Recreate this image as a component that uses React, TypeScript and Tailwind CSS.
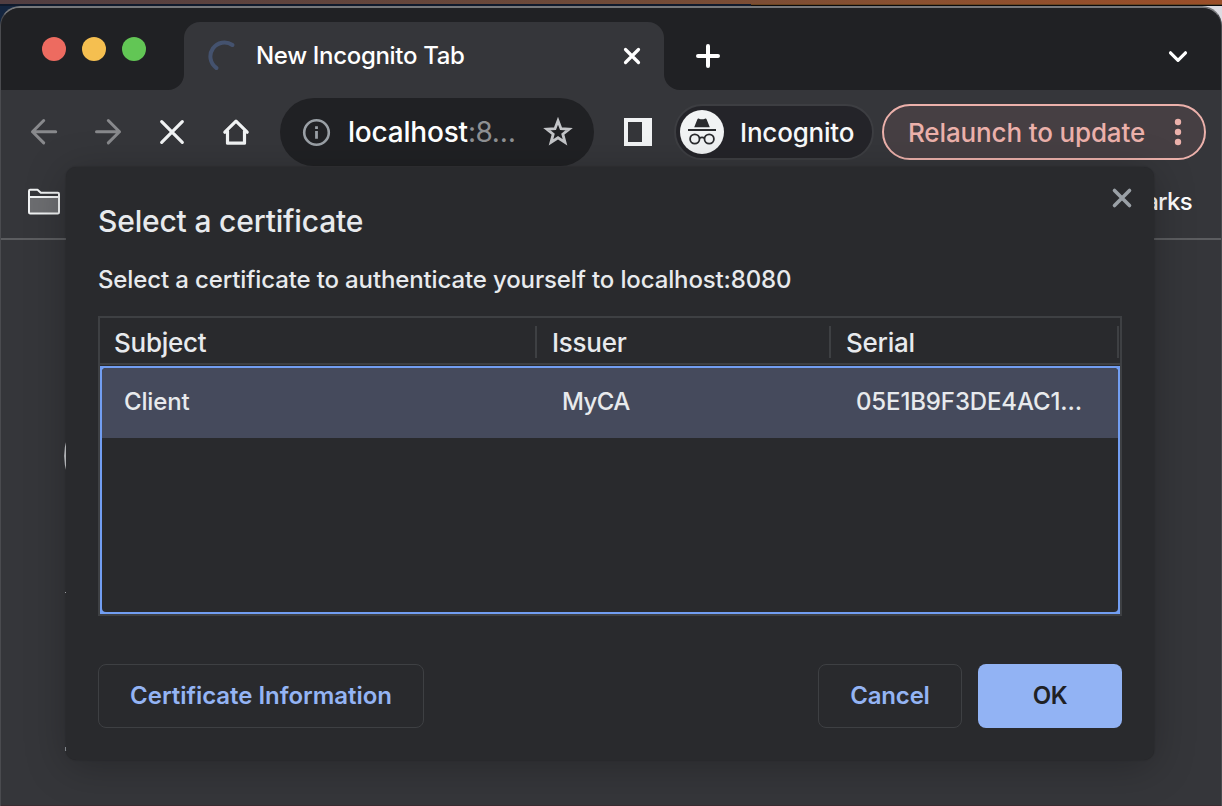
import React from "react";

const line = {
  fill: "none",
  stroke: "currentColor",
  strokeLinecap: "round" as const,
  strokeLinejoin: "round" as const,
};

function TabFoot({ flip = false }: { flip?: boolean }) {
  return (
    <svg className="block h-4 w-4 self-end" viewBox="0 0 16 16" fill="#35363a">
      <path d={flip ? "M0 0A16 16 0 0 0 16 16H0Z" : "M16 0A16 16 0 0 1 0 16H16Z"} />
    </svg>
  );
}

function TabStrip() {
  return (
    <div className="flex h-[82px] shrink-0 bg-[#202124]">
      <div className="flex w-[167px] shrink-0 items-start gap-4 pt-[29px] pl-[41px]">
        <span className="h-6 w-6 shrink-0 rounded-full bg-[#ed6b60]" />
        <span className="h-6 w-6 shrink-0 rounded-full bg-[#f5bf50]" />
        <span className="h-6 w-6 shrink-0 rounded-full bg-[#62c655]" />
      </div>
      <TabFoot />
      <div className="mt-[14px] flex w-[480px] shrink-0 items-center rounded-t-[16px] bg-[#35363a] pr-4 pl-[23px] text-white">
        <svg className="h-8 w-8 text-[#44526e]" viewBox="0 0 32 32" {...line} strokeWidth="4">
          <path d="M25.4 5A14 14 0 1 0 9.4 28" />
        </svg>
        <span className="ml-[17px] flex-1 text-2xl font-medium tracking-[-0.32px]">New Incognito Tab</span>
        <svg className="h-8 w-8" viewBox="0 0 32 32" {...line} strokeWidth="3.2">
          <path d="M9.5 9.5L22.5 22.5M22.5 9.5L9.5 22.5" />
        </svg>
      </div>
      <TabFoot flip />
      <div className="mt-[14px] flex flex-1 items-center justify-between pr-[27px] pl-3 text-white">
        <svg className="h-8 w-8" viewBox="0 0 32 32" {...line} strokeWidth="4">
          <path d="M16 6V26M6 16H26" />
        </svg>
        <svg className="h-8 w-8" viewBox="0 0 32 32" {...line} strokeWidth="3.2">
          <path d="M8.5 12.8L16 20.3L23.5 12.8" />
        </svg>
      </div>
    </div>
  );
}

function NavIcons() {
  return (
    <div className="flex shrink-0 items-center gap-8 text-[#f1f3f4]">
      <svg className="h-8 w-8 text-[#88898c]" viewBox="0 0 32 32" {...line} strokeWidth="3">
        <path d="M27.7 15.7H4.5M15.7 4.5L4.5 15.7L15.7 26.9" />
      </svg>
      <svg className="h-8 w-8 text-[#88898c]" viewBox="0 0 32 32" {...line} strokeWidth="3">
        <path d="M4.5 15.7H27.5M16.3 4.5L27.5 15.7L16.3 26.9" />
      </svg>
      <svg className="h-8 w-8" viewBox="0 0 32 32" {...line} strokeWidth="3.2">
        <path d="M5.7 5.7L26.3 26.3M26.3 5.7L5.7 26.3" />
      </svg>
      <svg className="h-8 w-8" viewBox="0 0 32 32" {...line} strokeWidth="3.2">
        <path d="M4.8 16.2L16 5.2L27.2 16.2M7.5 15V27.2H24.5V15" />
      </svg>
    </div>
  );
}

function Omnibox() {
  return (
    <div className="ml-7 flex h-[68px] w-[314px] shrink-0 items-center rounded-full bg-[#202124] pr-5 pl-[22px]">
      <svg className="h-[29px] w-[29px]" viewBox="0 0 29 29" fill="none">
        <circle cx="14.5" cy="14.5" r="12.3" stroke="#9aa0a6" strokeWidth="2.6" />
        <path d="M13.1 8.2H15.9V11H13.1ZM13.1 12.9H15.9V20.8H13.1Z" fill="#9aa0a6" />
      </svg>
      <span className="ml-[17px] flex-1 text-[28px] font-medium tracking-[-0.2px] whitespace-nowrap text-white">
        localhost<span className="font-normal tracking-[-0.5px] text-[#8e9093]">:8…</span>
      </span>
      <svg className="h-8 w-8" viewBox="0 0 32 32" fill="none">
        <path
          d="M16 4.8L19 12.7L27.1 13.1L20.8 18.2L23 26.4L16 21.8L9 26.4L11.2 18.2L4.9 13.1L13 12.7Z"
          stroke="#c3c5c8"
          strokeWidth="2.8"
        />
      </svg>
    </div>
  );
}

function IncognitoIcon() {
  return (
    <svg className="h-11 w-11 shrink-0" viewBox="0 0 44 44" fill="none">
      <circle cx="22" cy="22" r="22" fill="#f1f3f4" />
      <path
        d="M14.2 17.2L17.3 9.5C17.6 8.7 18.4 8.4 19.1 8.7C21 9.4 23 9.4 24.9 8.7C25.6 8.4 26.4 8.7 26.7 9.5L29.8 17.2Z"
        fill="#2a2b2e"
      />
      <path d="M8 20H36" stroke="#2a2b2e" strokeWidth="1.8" />
      <circle cx="14.8" cy="29" r="4.7" stroke="#2a2b2e" strokeWidth="1.8" />
      <circle cx="29.2" cy="29" r="4.7" stroke="#2a2b2e" strokeWidth="1.8" />
      <path d="M19.4 28.3C21 27.2 23 27.2 24.6 28.3" stroke="#2a2b2e" strokeWidth="1.8" />
    </svg>
  );
}

function Toolbar() {
  return (
    <div className="flex h-[84px] shrink-0 items-center pl-[27px]">
      <NavIcons />
      <Omnibox />
      <svg className="ml-[30px] h-7 w-7 shrink-0" viewBox="0 0 28 28" fill="#f1f3f4" fillRule="evenodd">
        <path d="M0 0H28V28H0ZM4 4V24H18V4Z" />
      </svg>
      <div className="ml-[22px] flex h-14 w-[200px] shrink-0 items-center rounded-full border-2 border-[#3d3e42] bg-[#242429] pl-1 text-[26px] text-[#f8f9fa]">
        <IncognitoIcon />
        <span className="ml-4 font-medium tracking-[-0.2px] whitespace-nowrap">Incognito</span>
      </div>
      <div className="ml-2 flex h-14 w-[324px] shrink-0 items-center justify-between rounded-full border-2 border-[#ecb1ab] bg-[#463f43] pr-[22px] pl-6 text-[26px] text-[#ecb1ab]">
        <span className="font-medium tracking-[-0.14px] whitespace-nowrap">Relaunch to update</span>
        <svg className="h-[30px] w-2" viewBox="0 0 8 30" fill="currentColor">
          <circle cx="4" cy="5" r="3.2" />
          <circle cx="4" cy="15" r="3.2" />
          <circle cx="4" cy="25" r="3.2" />
        </svg>
      </div>
    </div>
  );
}

function BookmarksBar() {
  return (
    <div className="flex h-[66px] shrink-0 items-start justify-between border-b-2 border-[#5c5d60] pr-[29px] pl-[25px]">
      <svg className="mt-[12px] h-8 w-9" viewBox="0 0 36 32" fill="none" stroke="#f1f3f4" strokeWidth="2" strokeLinejoin="round">
        <path d="M3 11H33V27.2H3Z" fill="#6c6d70" stroke="none" />
        <path d="M3 26.4V4.9Q3 3.7 4.2 3.7H11.5L14.8 6.7H31.8Q33 6.7 33 7.9V26.2Q33 27.4 31.8 27.4H4.2Q3 27.4 3 26.2M3 11H33" />
      </svg>
      <span className="mt-2 text-2xl leading-10 font-medium tracking-[-0.7px] text-white">All Bookmarks</span>
    </div>
  );
}

function Separator() {
  return <span className="h-8 w-0.5 bg-[#3e4043]" />;
}

function CertificateDialog() {
  return (
    <div
      role="dialog"
      className="absolute top-[167px] left-[66px] flex h-[593px] w-[1088px] flex-col rounded-[10px] bg-[#292a2d] px-8 font-medium text-[#e8eaed] shadow-[0_0_2px_rgba(0,0,0,0.3),0_6px_40px_rgba(0,0,0,0.26)]"
    >
      <div className="flex h-[90px] shrink-0 items-start justify-between">
        <h1 className="mt-[34px] text-[30px] leading-10 tracking-[-0.18px]">Select a certificate</h1>
        <svg className="mt-[15px] -mr-4 h-8 w-8 text-[#9aa0a6]" viewBox="0 0 32 32" {...line} strokeWidth="3.6">
          <path d="M8.5 8.5L23.5 23.5M23.5 8.5L8.5 23.5" />
        </svg>
      </div>
      <p className="h-[59px] shrink-0 pt-[3px] text-2xl leading-10 tracking-[-0.13px]">
        Select a certificate to authenticate yourself to localhost:8080
      </p>
      <div className="flex h-[300px] w-[1024px] shrink-0 flex-col border-2 border-[#3e4043]">
        <div className="flex h-[47px] shrink-0 items-center border-b-2 border-[#3e4043] pt-[3px] text-[26px] tracking-[-0.25px]">
          <span className="w-[435px] pl-[14px]">Subject</span>
          <Separator />
          <span className="w-[292px] pl-[15px]">Issuer</span>
          <Separator />
          <span className="w-[286px] pl-[15px]">Serial</span>
          <Separator />
        </div>
        <div className="mt-px flex flex-1 flex-col bg-[#729ef2] p-0.5">
          <div className="flex flex-1 flex-col overflow-hidden rounded-[4px] bg-[#292a2d]">
            <div className="flex h-[70px] items-center bg-[#454a5c] pb-[3px] text-2xl">
              <span className="w-[438px] pl-[22px] tracking-[-0.15px]">Client</span>
              <span className="w-[294px] pl-[22px] tracking-[-0.6px]">MyCA</span>
              <span className="pl-[22px] tracking-[-0.13px]">05E1B9F3DE4AC1…</span>
            </div>
          </div>
        </div>
      </div>
      <div className="mt-12 flex w-[1024px] items-center gap-4 text-2xl font-semibold text-[#94b4f4]">
        <button className="h-16 w-[326px] rounded-lg border border-[#3e4043] tracking-[-0.04px]">Certificate Information</button>
        <button className="ml-auto h-16 w-36 rounded-lg border border-[#3e4043] tracking-[-0.2px]">Cancel</button>
        <button className="h-16 w-36 rounded-lg bg-[#92b3f4] tracking-[-0.3px] text-[#202124]">OK</button>
      </div>
    </div>
  );
}

export default function App() {
  return (
    <div className="relative flex h-[806px] w-[1222px] flex-col overflow-hidden bg-[linear-gradient(90deg,#14253f_50%,#dcdce2_50%)] font-['Inter',sans-serif] antialiased">
      <div className="h-1 shrink-0 bg-[linear-gradient(90deg,#503d41,#6f4a38_50%,#8a5030_75%,#9b4e28)]" />
      <div className="flex h-0.5 shrink-0">
        <span className="w-[751px] bg-[#101a2c]" />
        <span className="flex-1 bg-[linear-gradient(#6b4420_50%,#0a0a0c_50%)]" />
      </div>
      <div className="flex flex-1 flex-col overflow-hidden rounded-t-[20px] border-x border-t-2 border-x-[#4a4b4f] border-t-[#77787b] bg-[#35363a]">
        <TabStrip />
        <Toolbar />
        <BookmarksBar />
        <div className="flex flex-1 flex-col pl-[63px]">
          <svg className="mt-[198px] h-9 w-2" viewBox="0 0 8 36" fill="none" stroke="#dadce0" strokeWidth="2">
            <path d="M4 0Q-1.6 18 4 36" />
          </svg>
          <span className="mt-[118px] ml-px h-px w-1 bg-[#bdc1c6]" />
          <span className="mt-[154px] ml-px h-1 w-1 bg-[#9aa0a6]" />
          <span className="mt-auto -ml-[63px] h-px bg-[#3a2c31]" />
        </div>
      </div>
      <CertificateDialog />
    </div>
  );
}
